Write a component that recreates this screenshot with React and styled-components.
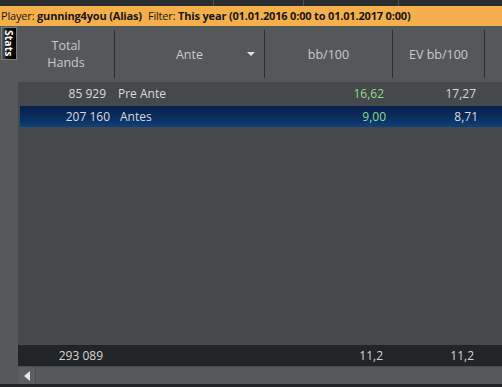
import React from 'react'
import styled, { createGlobalStyle } from 'styled-components'

const COLS = '97px 150px 128px 92px 1fr'

const rows = [
  { hands: '85 929', ante: 'Pre Ante', bb: '16,62', ev: '17,27' },
  { hands: '207 160', ante: 'Antes', bb: '9,00', ev: '8,71', selected: true },
]

export default function App() {
  return (
    <>
      <Global />
      <Window>
        <TopStrip>
          <TopSep style={{ left: 213 }} />
          <TopSep style={{ left: 303 }} />
          <TopSep style={{ left: 398 }} />
        </TopStrip>
        <InfoBar>
          Player: <b>gunning4you (Alias)</b>
          <Gap />
          Filter: <b>This year (01.01.2016 0:00 to 01.01.2017 0:00)</b>
        </InfoBar>
        <Main>
          <SideRail>
            <StatsTab>Stats</StatsTab>
          </SideRail>
          <Grid>
            <Header>
              <HeadCell>
                Total
                <br />
                Hands
              </HeadCell>
              <HeadCell>
                Ante
                <Caret />
              </HeadCell>
              <HeadCell>bb/100</HeadCell>
              <HeadCell>EV bb/100</HeadCell>
              <HeadCell $blank />
            </Header>
            <Body>
              {rows.map((r) => (
                <Row key={r.ante} $selected={r.selected}>
                  <Cell $align="right">{r.hands}</Cell>
                  <Cell $align="left">{r.ante}</Cell>
                  <Cell $align="right" $green>
                    {r.bb}
                  </Cell>
                  <Cell $align="right">{r.ev}</Cell>
                  <Cell />
                </Row>
              ))}
            </Body>
            <Footer>
              <Cell $align="right" $pad={12}>
                293 089
              </Cell>
              <Cell />
              <Cell $align="right" $pad={10}>
                11,2
              </Cell>
              <Cell $align="right" $pad={11}>
                11,2
              </Cell>
              <Cell />
            </Footer>
            <HScroll>
              <ArrowButton>
                <svg width="6" height="10" viewBox="0 0 6 10">
                  <path d="M6 0 L0 5 L6 10 Z" fill="#e4e6e7" />
                </svg>
              </ArrowButton>
            </HScroll>
          </Grid>
        </Main>
        <BottomEdge />
      </Window>
    </>
  )
}

const Global = createGlobalStyle`
  html, body {
    margin: 0;
    padding: 0;
    background: #1f2225;
  }
  body {
    font-family: "Open Sans", "Noto Sans", sans-serif;
  }
`

const Window = styled.div`
  width: 502px;
  height: 387px;
  display: flex;
  flex-direction: column;
  background: #55595c;
  overflow: hidden;
`

const TopStrip = styled.div`
  position: relative;
  height: 6px;
  background: #2b2e31;
  flex-shrink: 0;
`

const TopSep = styled.span`
  position: absolute;
  top: 0;
  width: 1px;
  height: 6px;
  background: #4c5054;
`

const InfoBar = styled.div`
  height: 20px;
  flex-shrink: 0;
  background: #f6b04b;
  color: #161616;
  font-size: 11px;
  letter-spacing: -0.17px;
  line-height: 20px;
  padding-left: 1px;
  white-space: nowrap;

  b {
    font-weight: 700;
  }
`

const Gap = styled.span`
  display: inline-block;
  width: 6px;
`

const Main = styled.div`
  flex: 1;
  display: flex;
  min-height: 0;
`

const SideRail = styled.div`
  width: 18px;
  flex-shrink: 0;
  background: #55595c;
  padding-top: 1px;
`

const StatsTab = styled.div`
  width: 16px;
  height: 33px;
  margin-left: 1px;
  box-sizing: border-box;
  border: 1px solid #7a7e81;
  background: linear-gradient(to right, #5a5d60 0%, #111 35%, #000 100%);
  color: #fff;
  font-size: 10.5px;
  font-weight: 700;
  writing-mode: vertical-rl;
  display: flex;
  align-items: center;
  justify-content: center;
  line-height: 1;
`

const Grid = styled.div`
  flex: 1;
  display: flex;
  flex-direction: column;
  min-width: 0;
`

const Header = styled.div`
  height: 56px;
  flex-shrink: 0;
  display: grid;
  grid-template-columns: ${COLS};
  background: #54585b;
  align-items: center;
`

const HeadCell = styled.div`
  position: relative;
  height: 48px;
  display: flex;
  align-items: center;
  justify-content: center;
  text-align: center;
  color: #c8cacb;
  font-size: 12.5px;
  line-height: 17px;
  border-right: ${(p) => (p.$blank ? 'none' : '1px solid #2c2f32')};
`

const Caret = styled.span`
  position: absolute;
  right: 9px;
  top: 22px;
  width: 0;
  height: 0;
  border-left: 4px solid transparent;
  border-right: 4px solid transparent;
  border-top: 4px solid #dfe1e2;
`

const Body = styled.div`
  flex: 1;
  background: #45494c;
  display: flex;
  flex-direction: column;
`

const Row = styled.div`
  display: grid;
  grid-template-columns: ${COLS};
  height: ${(p) => (p.$selected ? '21px' : '23px')};
  margin-top: ${(p) => (p.$selected ? '1px' : '0')};
  margin-left: ${(p) => (p.$selected ? '2px' : '0')};
  align-items: center;
  color: #d9dadb;
  font-size: 12px;
  background: ${(p) =>
    p.$selected
      ? 'linear-gradient(to bottom, #071f4d 0%, #0a2d5e 55%, #0f4279 100%)'
      : 'transparent'};

  & > div:first-child {
    padding-right: ${(p) => (p.$selected ? '7px' : '9px')};
  }
`

const Cell = styled.div`
  text-align: ${(p) => p.$align || 'left'};
  padding: ${(p) =>
    p.$align === 'right' ? `0 ${p.$pad || 9}px 0 0` : p.$align === 'left' ? '0 0 0 3px' : '0'};
  color: ${(p) => (p.$green ? '#92dc86' : 'inherit')};
  white-space: nowrap;
`

const Footer = styled.div`
  height: 21px;
  flex-shrink: 0;
  display: grid;
  grid-template-columns: ${COLS};
  align-items: center;
  background: #222528;
  color: #d4d5d6;
  font-size: 12px;
`

const HScroll = styled.div`
  height: 17px;
  flex-shrink: 0;
  display: flex;
  background: #56595c;
  border-top: 1px solid #4a4e51;
`

const ArrowButton = styled.div`
  width: 17px;
  display: flex;
  align-items: center;
  justify-content: center;
  border-right: 1px solid #484c4f;
  background: #5a5e61;
`

const BottomEdge = styled.div`
  height: 3px;
  flex-shrink: 0;
  background: #1f2225;
`
